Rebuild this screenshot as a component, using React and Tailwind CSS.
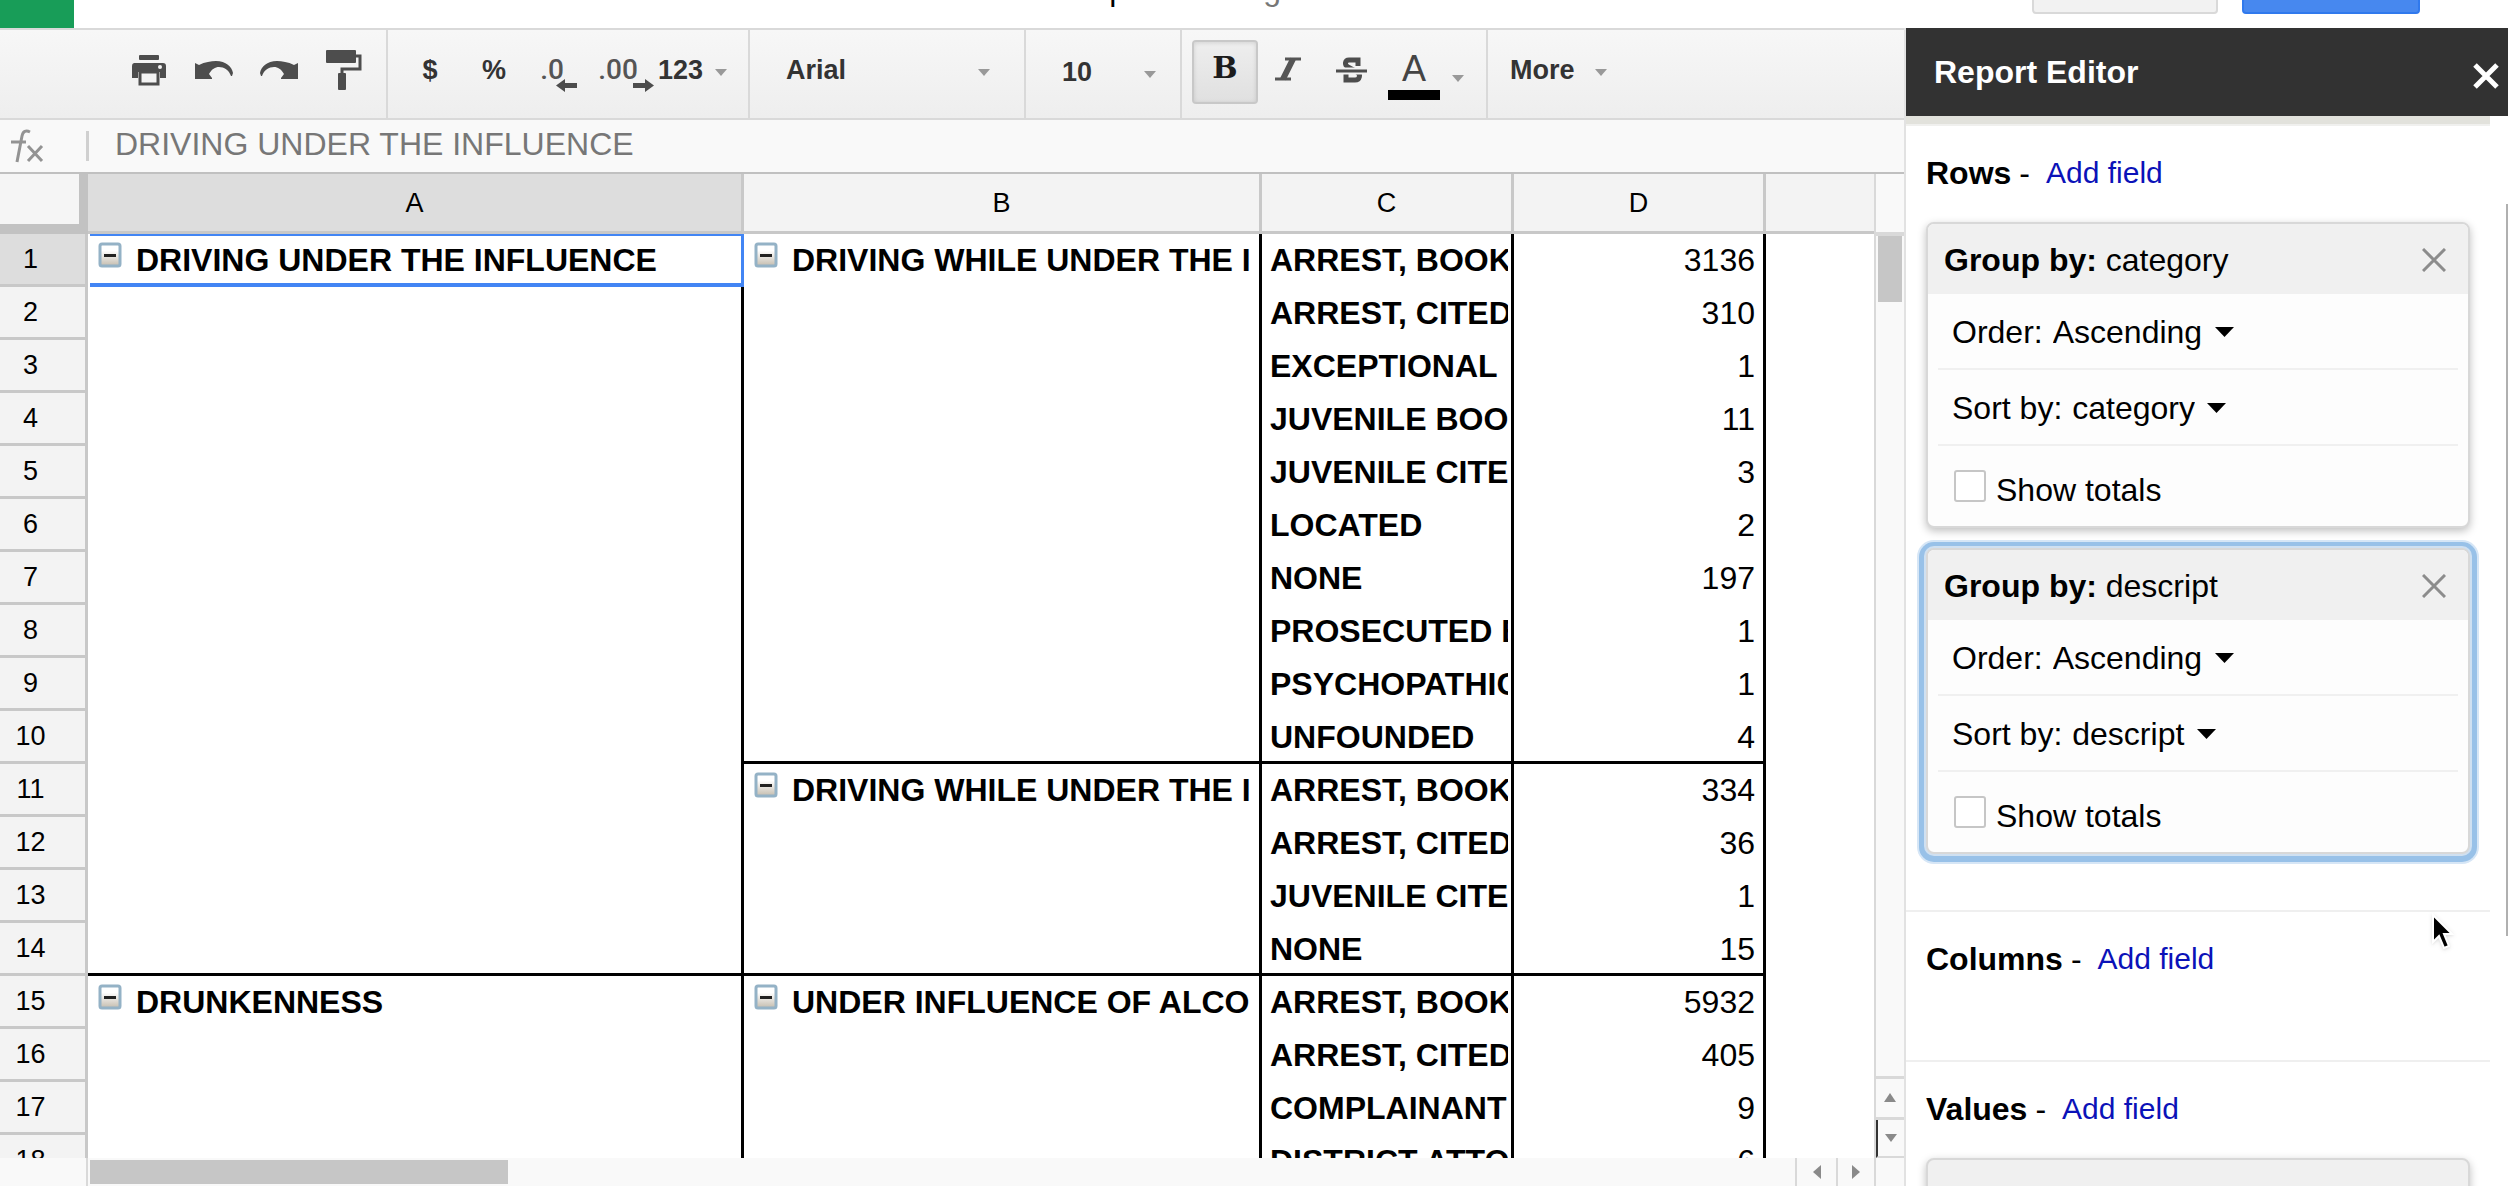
import React from "react";

const MENUS = ["File", "Edit", "View", "Insert", "Format", "Data", "Tools", "Add-ons", "Help"];

const GROUPS = [
  {
    category: "DRIVING UNDER THE INFLUENCE",
    descripts: [
      {
        name: "DRIVING WHILE UNDER THE I",
        rows: [
          ["ARREST, BOOK", "3136"],
          ["ARREST, CITED", "310"],
          ["EXCEPTIONAL", "1"],
          ["JUVENILE BOO", "11"],
          ["JUVENILE CITE", "3"],
          ["LOCATED", "2"],
          ["NONE", "197"],
          ["PROSECUTED B", "1"],
          ["PSYCHOPATHIC", "1"],
          ["UNFOUNDED", "4"],
        ],
      },
      {
        name: "DRIVING WHILE UNDER THE I",
        rows: [
          ["ARREST, BOOK", "334"],
          ["ARREST, CITED", "36"],
          ["JUVENILE CITE", "1"],
          ["NONE", "15"],
        ],
      },
    ],
  },
  {
    category: "DRUNKENNESS",
    descripts: [
      {
        name: "UNDER INFLUENCE OF ALCO",
        rows: [
          ["ARREST, BOOK", "5932"],
          ["ARREST, CITED", "405"],
          ["COMPLAINANT", "9"],
          ["DISTRICT ATTO", "6"],
        ],
      },
    ],
  },
];

function buildRows() {
  const out = [];
  GROUPS.forEach((group) => {
    const span = group.descripts.reduce((n, d) => n + d.rows.length, 0);
    group.descripts.forEach((descript, di) => {
      descript.rows.forEach((row, ri) => {
        out.push({
          number: out.length + 1,
          category: di === 0 && ri === 0 ? { name: group.category, span } : null,
          descript: ri === 0 ? { name: descript.name, span: descript.rows.length } : null,
          resolution: row[0],
          count: row[1],
          last: ri === descript.rows.length - 1,
        });
      });
    });
  });
  return out;
}

function Caret({ className }) {
  return (
    <svg viewBox="0 0 12 7" preserveAspectRatio="none" className={"pointer-events-none shrink-0 " + className} aria-hidden="true">
      <path d="M0 0h12L6 7z" fill="currentColor" />
    </svg>
  );
}

function CollapseButton({ label }) {
  return (
    <button type="button" aria-label={"Collapse " + label} className="mt-2 h-[27px] w-6 shrink-0">
      <svg viewBox="0 0 24 27" className="h-full w-full">
        <defs>
          <linearGradient id="collapse" x1="0" y1="0" x2="0" y2="1">
            <stop offset="0.3" stopColor="#ffffff" />
            <stop offset="1" stopColor="#c4bcae" />
          </linearGradient>
        </defs>
        <rect x="2" y="2" width="20" height="22" rx="2" fill="url(#collapse)" stroke="#94b2c6" strokeWidth="3" />
        <rect x="6" y="12" width="12" height="3" fill="#222" />
      </svg>
    </button>
  );
}

function PrintIcon() {
  return (
    <svg width="36" height="32" viewBox="0 0 36 32" aria-hidden="true">
      <rect x="8" y="1" width="20" height="5" rx="1" fill="#4d4d4d" />
      <path d="M3 9h29a3 3 0 0 1 3 3v12h-6v-6H7v6H1V12a3 3 0 0 1 2-3z" fill="#4d4d4d" />
      <circle cx="29" cy="13" r="2" fill="#f3f3f3" />
      <rect x="9" y="18" width="18" height="12" fill="#f3f3f3" stroke="#4d4d4d" strokeWidth="3" />
    </svg>
  );
}

function ArrowIcon({ flip }) {
  return (
    <svg width="38" height="20" viewBox="0 0 38 20" aria-hidden="true" className={flip ? "-scale-x-100" : ""}>
      <path d="M0 3l4 2C10 2 16 1 21 1c10 0 16 6 17 12l-1 3h-1c-2-6-7-9-12-9-4 0-7 2-10 7l3 4v1H0z" fill="#4d4d4d" />
    </svg>
  );
}

function PaintIcon() {
  return (
    <svg width="36" height="42" viewBox="0 0 36 42" aria-hidden="true">
      <rect x="0" y="1" width="30" height="13" rx="1" fill="#4d4d4d" />
      <path d="M30 7h4v13H16v6" fill="none" stroke="#4d4d4d" strokeWidth="3" />
      <rect x="12" y="24" width="8" height="17" rx="1" fill="#4d4d4d" />
    </svg>
  );
}

function SmallArrow({ right }) {
  return (
    <svg width="21" height="13" viewBox="0 0 21 13" aria-hidden="true" className={"absolute top-[30px] " + (right ? "-right-2" : "left-4 -scale-x-100")}>
      <path d="M0 4h12V0l9 6.500-9 6.500V9H0z" fill="#4d4d4d" />
    </svg>
  );
}

function Toolbar() {
  const group = "flex shrink-0 items-center border-r-2 border-[#d9d9d9] pb-2";
  const caret = "mt-1 h-[7px] w-3 text-[#999]";
  return (
    <div role="toolbar" className="flex h-[92px] shrink-0 border-y-2 border-[#d9d9d9] bg-gradient-to-b from-[#f7f7f7] to-[#eeeeee] text-[27px] font-bold text-[#333]">
      <div className={group + " w-[388px] pl-[116px]"}>
        <button type="button" aria-label="Print" className="flex w-[65px] justify-center"><PrintIcon /></button>
        <button type="button" aria-label="Undo" className="flex w-[65px] justify-center"><ArrowIcon /></button>
        <button type="button" aria-label="Redo" className="flex w-[65px] justify-center"><ArrowIcon flip /></button>
        <button type="button" aria-label="Paint format" className="flex w-[65px] justify-center"><PaintIcon /></button>
      </div>
      <div className={group + " w-[362px] pl-[10px]"}>
        <button type="button" className="w-16">$</button>
        <button type="button" className="w-16">%</button>
        <button type="button" aria-label="Decrease decimal places" className="flex w-16 justify-center font-['Roboto',sans-serif] text-[28px] font-medium text-[#555]">
          <span className="relative pr-3">.0<SmallArrow /></span>
        </button>
        <button type="button" aria-label="Increase decimal places" className="flex w-16 justify-center font-['Roboto',sans-serif] text-[28px] font-medium text-[#555]">
          <span className="relative pr-2">.00<SmallArrow right /></span>
        </button>
        <button type="button" className="ml-1 flex items-center gap-3">123<Caret className={caret} /></button>
      </div>
      <div className={group + " w-[276px] pl-9 pr-[34px]"}>
        <select aria-label="Font" className="flex-1 appearance-none bg-transparent font-bold"><option>Arial</option></select>
        <Caret className={caret} />
      </div>
      <div className={group + " w-[156px] pl-9 pr-6 pt-1"}>
        <select aria-label="Font size" className="flex-1 appearance-none bg-transparent font-bold"><option>10</option></select>
        <Caret className={caret} />
      </div>
      <div className="flex w-[306px] shrink-0 items-start border-r-2 border-[#d9d9d9] pl-[10px] pt-[10px]">
        <button type="button" aria-pressed="true" className="h-16 w-[66px] rounded border-2 border-[#c8c8c8] bg-gradient-to-b from-[#eeeeee] to-[#e0e0e0] pb-2 font-['DejaVu_Serif',serif] text-[30px] leading-[52px] text-[#1c1c1c] shadow-[inset_0_1px_4px_rgba(0,0,0,0.12)]">B</button>
        <button type="button" aria-label="Italic" className="flex h-16 w-[60px] justify-center pt-[17px]">
          <svg width="26" height="24" viewBox="0 0 26 24" aria-hidden="true">
            <path d="M10 2h16M0 22h16" stroke="#555" strokeWidth="3" />
            <path d="M18 2L8 22" stroke="#555" strokeWidth="6" />
          </svg>
        </button>
        <button type="button" aria-label="Strikethrough" className="flex h-16 w-[66px] justify-center pt-[17px]">
          <svg width="31" height="26" viewBox="0 0 31 26" aria-hidden="true" fill="none" stroke="#4d4d4d">
            <path d="M22 9V3H13c-4 0-5 5-1 7l9 5c4 2 3 8-2 8h-9V17" strokeWidth="5" />
            <path d="M0 14h31" stroke="#f2f2f2" strokeWidth="7" />
            <path d="M0 14h31" strokeWidth="3" />
          </svg>
        </button>
        <button type="button" aria-label="Text color" className="ml-1 flex items-center gap-3 font-normal text-[#444]">
          <span className="block w-[52px] border-b-[10px] border-black pt-2 text-center text-[36px] leading-[42px]">A</span>
          <Caret className="mt-4 h-[7px] w-3 text-[#999]" />
        </button>
      </div>
      <div className="flex flex-1 items-center pb-2 pl-[22px]">
        <button type="button" className="flex items-center gap-5">More<Caret className={caret} /></button>
      </div>
    </div>
  );
}

function Sheet() {
  const rows = buildRows();
  const head = "h-[60px] border-b-[3px] border-[#c8c8c8] p-0 font-normal";
  return (
    <table className="w-full table-fixed border-separate border-spacing-0 text-[32px] leading-[48px]">
      <colgroup>
        <col className="w-[88px]" />
        <col className="w-[656px]" />
        <col className="w-[518px]" />
        <col className="w-[252px]" />
        <col className="w-[252px]" />
        <col />
      </colgroup>
      <thead className="bg-[#f3f3f3] text-[27px] leading-[56px]">
        <tr>
          <td className="h-[60px] border-b-[10px] border-r-[9px] border-[#c2c2c2] bg-[#f5f5f5] p-0" />
          <th scope="col" className={head + " border-r-[3px] bg-[#dddddd]"}>A</th>
          <th scope="col" className={head + " border-r-[3px]"}>B</th>
          <th scope="col" className={head + " border-r-[3px]"}>C</th>
          <th scope="col" className={head + " border-r-[3px]"}>D</th>
          <td className={head} />
        </tr>
      </thead>
      <tbody>
        {rows.map((row) => {
          const end = row.last ? " border-b-[3px]" : "";
          return (
            <tr key={row.number}>
              <th
                scope="row"
                className={
                  "h-[53px] border-b-[3px] border-r-[3px] border-[#c8c8c8] p-0 pr-6 text-center text-[27px] font-normal " +
                  (row.number === 1 ? "bg-[#dddddd]" : "bg-[#f3f3f3]")
                }
              >
                {row.number}
              </th>
              {row.category && (
                <td rowSpan={row.category.span} className="relative border-b-[3px] border-r-[3px] border-black p-0 align-top font-bold">
                  <div className="flex items-start gap-[14px] overflow-hidden whitespace-nowrap pl-[10px]">
                    <CollapseButton label={row.category.name} />
                    <span className="pt-[2px]">{row.category.name}</span>
                  </div>
                  {row.number === 1 && (
                    <div className="pointer-events-none absolute -right-[3px] left-0.5 top-0 h-[53px] border-b-4 border-r-[3px] border-t-2 border-[#4285f4]" />
                  )}
                </td>
              )}
              {row.descript && (
                <td rowSpan={row.descript.span} className="border-b-[3px] border-r-[3px] border-black p-0 pr-[3px] align-top font-bold">
                  <div className="flex items-start gap-[14px] overflow-hidden whitespace-nowrap pl-[10px]">
                    <CollapseButton label={row.descript.name} />
                    <span className="pt-[2px]">{row.descript.name}</span>
                  </div>
                </td>
              )}
              <td className={"h-[53px] border-r-[3px] border-black p-0 pr-[3px] align-top font-bold" + end}>
                <div className="overflow-hidden whitespace-nowrap pl-2 pt-[2px]">{row.resolution}</div>
              </td>
              <td className={"h-[53px] border-r-[3px] border-black p-0 pr-2 pt-[2px] text-right align-top" + end}>{row.count}</td>
              <td className="p-0" />
            </tr>
          );
        })}
      </tbody>
    </table>
  );
}

function ScrollArrow({ label, path, className }) {
  return (
    <button type="button" aria-label={label} className={"flex items-center justify-center " + className}>
      <svg width="14" height="14" viewBox="0 0 14 14" aria-hidden="true"><path d={path} fill="#8a8a8a" /></svg>
    </button>
  );
}

function Heading({ title }) {
  return (
    <div className="flex h-24 items-center pb-[2px]">
      <h2 className="font-bold">{title}</h2>
      <span className="mx-2">-</span>
      <a href="#add" className="ml-2 text-[30px] text-[#0b12b8]">Add field</a>
    </div>
  );
}

function FieldSelect({ label, value, id }) {
  return (
    <div className="mx-[10px] flex h-[76px] items-center border-b-2 border-[#f0f0f0] pl-[14px] pt-[2px]">
      <label htmlFor={id}>{label}</label>
      <select id={id} className="ml-[10px] appearance-none bg-transparent"><option>{value}</option></select>
      <Caret className="ml-3 h-[10px] w-[19px] text-black" />
    </div>
  );
}

function GroupCard({ field, focused }) {
  return (
    <section
      className={
        "rounded-lg border-2 border-[#d8d8d8] bg-[#fdfdfd] " +
        (focused
          ? "shadow-[0_0_0_2px_#cfe0f1,0_1px_0_7px_#98c1e8,0_1px_0_9px_#d6e6f6]"
          : "shadow-[0_3px_8px_rgba(0,0,0,0.25)]")
      }
    >
      <header className="flex h-[70px] items-center justify-between rounded-t-md bg-[#f0f0f0] pl-4 pr-[22px] pt-[2px]">
        <h3><b>Group by:</b> {field}</h3>
        <button type="button" aria-label={"Remove " + field}>
          <svg width="24" height="24" viewBox="0 0 24 24" aria-hidden="true"><path d="M1 1l22 22M23 1L1 23" stroke="#8c8c8c" strokeWidth="3" /></svg>
        </button>
      </header>
      <FieldSelect label="Order:" value="Ascending" id={"order-" + field} />
      <FieldSelect label="Sort by:" value={field} id={"sort-" + field} />
      <div className="flex h-20 items-center gap-[10px] pl-[26px]">
        <input id={"totals-" + field} type="checkbox" className="h-8 w-8 appearance-none rounded-[3px] border-2 border-[#c6c6c6] bg-white" />
        <label htmlFor={"totals-" + field} className="pt-2">Show totals</label>
      </div>
    </section>
  );
}

function ReportEditor() {
  return (
    <aside className="relative flex w-[604px] shrink-0 flex-col overflow-hidden border-l-2 border-[#e2e2e2] bg-white text-[32px] leading-9">
      <div className="flex h-[88px] shrink-0 items-center justify-between bg-[#323232] pl-7 pr-[9px] text-white">
        <h1 className="font-bold">Report Editor</h1>
        <button type="button" aria-label="Close" className="pt-2">
          <svg width="26" height="26" viewBox="0 0 26 26" aria-hidden="true"><path d="M2 2l22 22M24 2L2 24" stroke="#fff" strokeWidth="5" /></svg>
        </button>
      </div>
      <div className="mr-[18px] h-[10px] shrink-0 border-b-2 border-[#f0f0ee] bg-[#e2e2dc]" />
      <div className="mr-[18px] border-b-2 border-[#efefef] pb-14 pl-5 pr-5">
        <Heading title="Rows" />
        <div className="flex flex-col gap-5">
          <GroupCard field="category" />
          <GroupCard field="descript" focused />
        </div>
      </div>
      <div className="mr-[18px] border-b-2 border-[#efefef] pb-[52px] pl-5"><Heading title="Columns" /></div>
      <div className="mr-[18px] min-h-0 flex-1 pl-5 pr-5">
        <Heading title="Values" />
        <div className="h-16 rounded-lg border-2 border-[#d8d8d8] bg-[#f0f0f0] shadow-[0_3px_8px_rgba(0,0,0,0.25)]" />
      </div>
      <div className="absolute right-0 top-44 h-[732px] w-[2px] bg-[#b0b0b0]" />
      <svg width="26" height="38" viewBox="0 0 26 38" className="absolute right-[51px] top-[885px] drop-shadow" aria-hidden="true">
        <path d="M2 2v27l6-6 5 12 5-2-5-12h8z" fill="#000" stroke="#fff" strokeWidth="2" />
      </svg>
    </aside>
  );
}

export default function App() {
  return (
    <div className="flex h-screen flex-col overflow-hidden bg-white font-['Liberation_Sans',Arial,sans-serif] text-black">
      <header className="flex h-7 shrink-0 overflow-hidden text-[32px]">
        <div className="w-[74px] shrink-0 bg-[#189d58]" />
        <nav className="-mt-[29px] ml-[49px] flex h-9 gap-10 leading-9">
          {MENUS.map((m) => (
            <button key={m} type="button">{m}</button>
          ))}
        </nav>
        <span className="-mt-[29px] ml-14 h-9 leading-9 text-[#777]">Saving...</span>
        <div className="-mt-12 ml-auto mr-[88px] flex gap-6">
          <button type="button" aria-label="Comments" className="h-[62px] w-[186px] rounded border-2 border-[#d9d9d9] bg-[#f2f2f2]" />
          <button type="button" aria-label="Share" className="h-[62px] w-[178px] rounded border-2 border-[#3079ed] bg-[#4788ef]" />
        </div>
      </header>

      <div className="flex min-h-0 flex-1">
        <main className="flex min-w-0 flex-1 flex-col">
          <Toolbar />
          <div className="flex h-[54px] shrink-0 items-center border-b-2 border-[#c0c0c0] bg-[#f9f9f9] text-[32px] text-[#777]">
            <svg width="36" height="34" viewBox="0 0 36 34" fill="none" stroke="#939393" className="ml-[9px] mr-[41px] shrink-0" aria-hidden="true">
              <path d="M21 3c-4-2-7-1-8 4L8 33M2 13h15" strokeWidth="3" />
              <path d="M19 17l14 15M33 17L19 32" strokeWidth="3" />
            </svg>
            <span className="h-[30px] w-[3px] bg-[#d0d0d0]" />
            <input aria-label="Formula" readOnly value="DRIVING UNDER THE INFLUENCE" className="ml-[26px] flex-1 bg-transparent pb-[4px] outline-none" />
          </div>
          <div className="flex min-h-0 flex-1">
            <div className="min-w-0 flex-1 overflow-hidden"><Sheet /></div>
            <div className="flex w-[30px] shrink-0 flex-col border-l-2 border-[#d9d9d9] bg-[#f9f9f9]">
              <div className="h-[62px] border-b-4 border-[#d9d9d9]" />
              <div className="mx-[2px] h-[66px] bg-[#c6c6c6]" />
              <div className="flex-1" />
              <ScrollArrow label="Scroll up" path="M7 2l6 9H1z" className="h-[44px] border-y-[3px] border-[#d9d9d9]" />
              <ScrollArrow label="Scroll down" path="M7 11L1 3h12z" className="h-[38px] border-b-2 border-l-2 border-b-[#d9d9d9] border-l-[#333]" />
            </div>
          </div>
          <div className="flex h-7 shrink-0 bg-[#f9f9f9]">
            <div className="w-[88px] shrink-0 border-r-2 border-[#d9d9d9]" />
            <div className="mb-[2px] ml-[2px] mt-[2px] w-[418px] bg-[#c6c6c6]" />
            <div className="flex-1" />
            <ScrollArrow label="Scroll left" path="M3 7l8-7v14z" className="w-[41px] border-l-2 border-[#d9d9d9]" />
            <ScrollArrow label="Scroll right" path="M11 7L3 0v14z" className="w-[38px] border-l-2 border-[#d9d9d9]" />
            <div className="w-[30px] border-l-2 border-[#d9d9d9]" />
          </div>
        </main>
        <ReportEditor />
      </div>
    </div>
  );
}
